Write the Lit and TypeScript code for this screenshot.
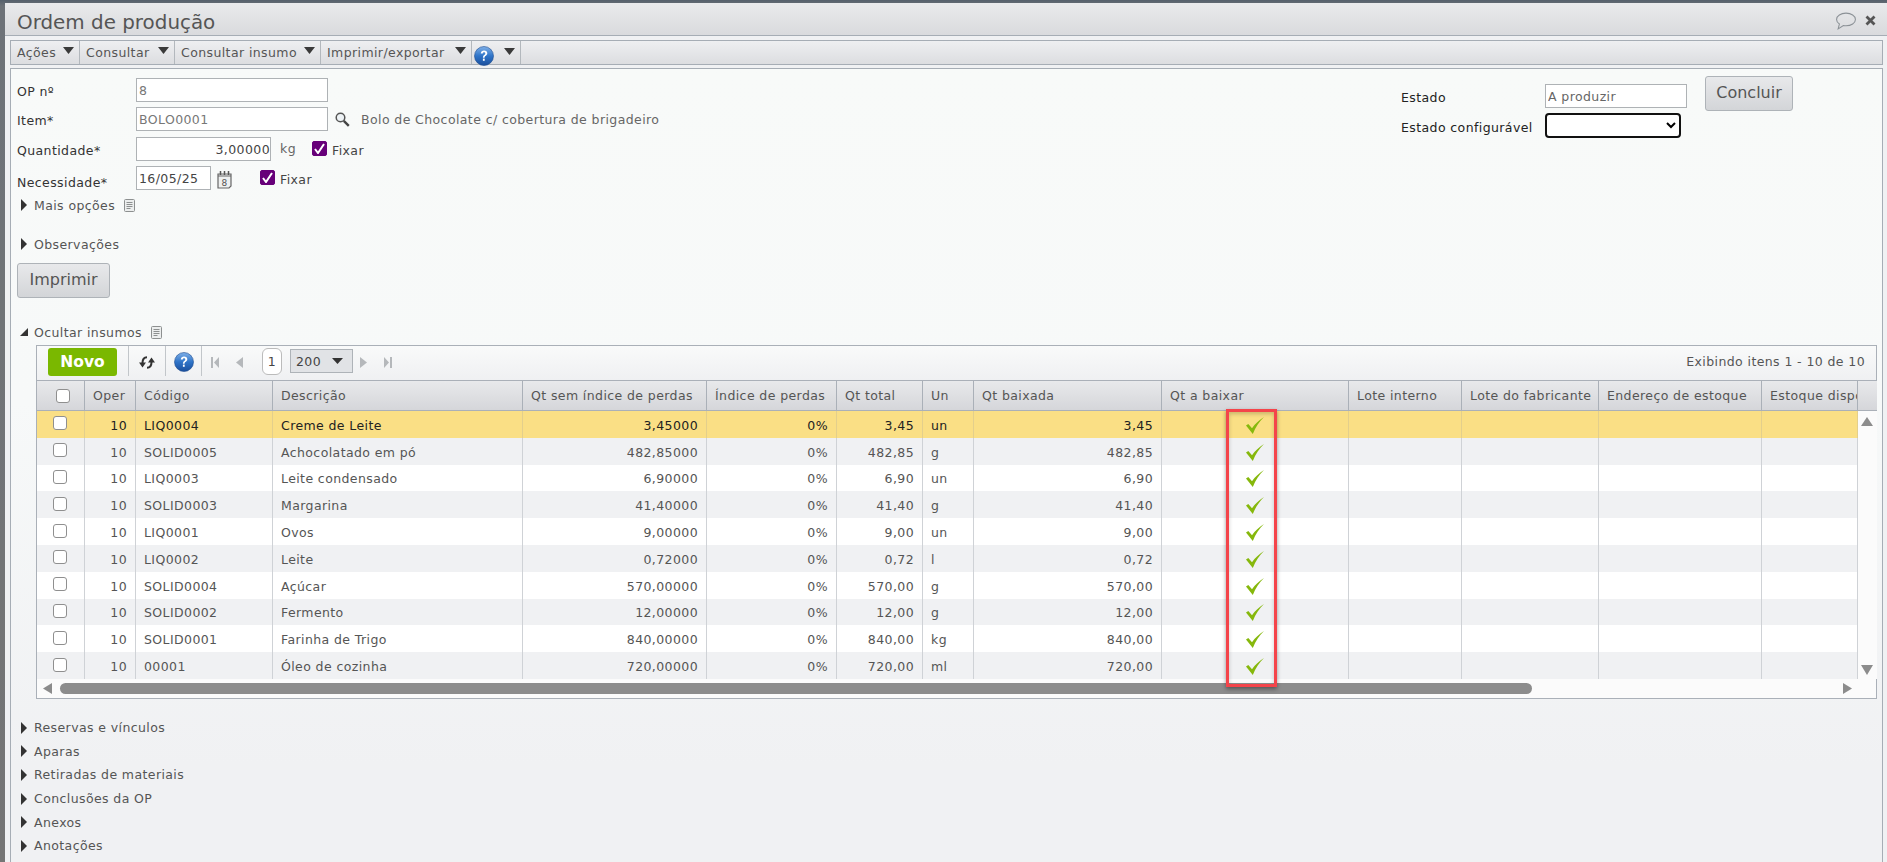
import { LitElement, html, css, svg } from "lit";
import { customElement } from "lit/decorators.js";

const COLS = [48, 51, 137, 250, 184, 130, 86, 51, 188, 187, 113, 137, 163, 96];
const HEADS = ["", "Oper", "Código", "Descrição", "Qt sem índice de perdas", "Índice de perdas", "Qt total", "Un", "Qt baixada", "Qt a baixar", "Lote interno", "Lote do fabricante", "Endereço de estoque", "Estoque disponível"];
const ROWS = [
  ["LIQ0004", "Creme de Leite", "3,45000", "3,45", "un"],
  ["SOLID0005", "Achocolatado em pó", "482,85000", "482,85", "g"],
  ["LIQ0003", "Leite condensado", "6,90000", "6,90", "un"],
  ["SOLID0003", "Margarina", "41,40000", "41,40", "g"],
  ["LIQ0001", "Ovos", "9,00000", "9,00", "un"],
  ["LIQ0002", "Leite", "0,72000", "0,72", "l"],
  ["SOLID0004", "Açúcar", "570,00000", "570,00", "g"],
  ["SOLID0002", "Fermento", "12,00000", "12,00", "g"],
  ["SOLID0001", "Farinha de Trigo", "840,00000", "840,00", "kg"],
  ["00001", "Óleo de cozinha", "720,00000", "720,00", "ml"],
];
const MENU = [
  ["Ações", 69],
  ["Consultar", 95],
  ["Consultar insumo", 146],
  ["Imprimir/exportar", 151],
];
const SECTIONS = ["Reservas e vínculos", "Aparas", "Retiradas de materiais", "Conclusões da OP", "Anexos", "Anotações"];

const caret = svg`<svg class="caret" width="11" height="7" viewBox="0 0 11 7"><path d="M0 0h11L5.500 7z" fill="#3a3a3a"/></svg>`;
const triRight = svg`<svg class="tri" width="6" height="12" viewBox="0 0 6 12"><path d="M0 0l6 6-6 6z" fill="#333"/></svg>`;
const triOpen = svg`<svg class="tri-open" width="8" height="8" viewBox="0 0 8 8"><path d="M8 0v8H0z" fill="#333"/></svg>`;
const doc = svg`<svg class="doc" width="11" height="13" viewBox="0 0 11 13"><rect x=".5" y=".5" width="10" height="12" rx="1" fill="#eceeee" stroke="#8d9090"/><path d="M2.500 3.500h6M2.500 5.500h6M2.500 7.500h6M2.500 9.500h4" stroke="#8d9090"/></svg>`;
const help = svg`<defs><linearGradient id="hb" x1="0" y1="0" x2="0" y2="1"><stop offset="0" stop-color="#7fb0e8"/><stop offset=".5" stop-color="#2f74c8"/><stop offset="1" stop-color="#1b4f9c"/></linearGradient></defs><circle cx="10" cy="10" r="9.500" fill="url(#hb)" stroke="#1d4c8f" stroke-width=".6"/><path d="M6.800 7.600c0-2 1.500-3 3.300-3 1.900 0 3.200 1.100 3.200 2.700 0 1.400-.9 2-1.800 2.700-.7.500-.9.900-.9 1.800H8.900c0-1.500.4-2.200 1.300-2.900.7-.5 1.100-.8 1.100-1.500 0-.7-.5-1.100-1.200-1.100-.8 0-1.300.5-1.300 1.300z" fill="#fff"/><rect x="8.900" y="12.600" width="1.800" height="2.200" fill="#fff"/>`;
const tick = svg`<svg class="tick" width="18" height="17" viewBox="0 0 18 17"><path d="M0 8.500l2.300-1.500 3.700 4.200C9 7 13 3 18 0 13.500 4.500 9.500 10 6.800 17z" fill="#86b80c"/></svg>`;

@customElement("app-root")
export class AppRoot extends LitElement {
  static styles = css`
    :host { display: block; width: 1887px; height: 862px; overflow: hidden; box-sizing: border-box; padding: 3px 0 0 5px;
      background: linear-gradient(#55606c, #6d7278 6px, #757575);
      font-family: "DejaVu Sans", Verdana, sans-serif; font-size: 12.500px; letter-spacing: .4px; color: #444; }
    * { box-sizing: border-box; }
    .window { height: 859px; display: flex; flex-direction: column; background: #f0f1f3; border-radius: 4px 0 0 0; }
    .title { height: 33px; flex: none; display: flex; align-items: center; padding: 3px 10px 0 12px;
      background: linear-gradient(#e9eaec, #d9dadd); border-bottom: 1px solid #a6adb5; }
    .title h1 { margin: 4px 0 0; font-weight: 400; font-size: 19.900px; letter-spacing: 0; color: #555; flex: 1; }
    .bubble { margin-right: 8px; }
    .close { margin-right: 1px; }
    .menu { height: 25px; flex: none; margin: 4px 4px 3px 5px; display: flex; border: 1px solid #a6adb5;
      background: linear-gradient(#eeeff1, #dcdde0); }
    .mi { display: flex; align-items: flex-start; border-right: 1px solid #b3b8bd; padding: 4px 5px 0 6px; justify-content: space-between; color: #555; line-height: 16px; }
    .caret { margin-top: 2px; flex: none; }
    .mi.h { padding: 5px 5px 0 2px; width: 49px; }
    .content { flex: 1; margin: 0 4px 0 5px; border: 1px solid #a6adb5; border-bottom: 0; min-height: 0;
      background: linear-gradient(#f8faf9, #f7f9f9 42%, #f0f1f3 88%); }
    .form { display: flex; justify-content: space-between; }
    .left { padding: 9px 0 0 6px; }
    .frow { display: flex; align-items: center; height: 24px; margin-bottom: 5px; }
    .frow .lab { width: 119px; color: #333; flex: none; padding-top: 2px; }
    .frow .lab.low { padding-top: 8px; }
    input.t { height: 24px; border: 1px solid #aeb2b5; background: #fff; font: inherit; letter-spacing: inherit; color: #777; padding: 0 2px; border-radius: 0; outline: 0; }
    input.dark { color: #444; }
    input.num { text-align: right; padding: 0; }
    .w192 { width: 192px; }
    .w135 { width: 135px; }
    .w75 { width: 75px; }
    .r2 { margin-bottom: 6px; }
    .search { margin-left: 7px; }
    .desc { margin-left: 11px; color: #666; }
    .kg { margin-left: 9px; color: #666; margin-top: -2px; }
    .fx { display: flex; align-items: center; color: #444; }
    .fx.a { margin-left: 16px; }
    .fx.b { margin-left: 28px; }
    input.ck { appearance: none; margin: 0 0 2px; width: 15px; height: 15px; border-radius: 2px; border: 1px solid #999; background: #fff; flex: none; display: block; }
    input.ck.on { background: #670079 center / 11px 11px no-repeat url("data:image/svg+xml,%3Csvg xmlns='http://www.w3.org/2000/svg' viewBox='0 0 11 11'%3E%3Cpath d='M1 6l3 4 6-9' fill='none' stroke='%23fff' stroke-width='2'/%3E%3C/svg%3E"); border-color: #670079; }
    .fx span { margin-left: 5px; padding-top: 2px; }
    .cal { margin-left: 6px; margin-top: 3px; }
    .sec { display: flex; align-items: center; height: 20px; color: #555; }
    .sec .tri { margin: 0 7px 0 4px; flex: none; }
    .sec .tri-open { margin: 0 6px 0 9px; flex: none; }
    .sec .doc { margin-left: 9px; }
    .more { margin-top: 2px; }
    .obs { margin-top: 19px; }
    .btn { display: block; height: 35px; border: 1px solid #aeb3b8; border-radius: 3px; background: linear-gradient(#e8e9eb, #d3d5d8);
      font: inherit; font-size: 16px; letter-spacing: 0; color: #555; padding: 0 0 2px; }
    .print { width: 93px; margin-top: 9px; }
    .right { display: grid; grid-template-columns: 144px 142px 18px 88px; grid-template-rows: 35px 25px; row-gap: 2px; margin: 7px 89px 0 0; align-content: start; color: #222; }
    .right .l1 { grid-column: 1; grid-row: 1; padding-top: 14px; }
    .right .l2 { grid-column: 1; grid-row: 2; align-self: center; padding-top: 3px; white-space: nowrap; }
    .right input { grid-column: 2; grid-row: 1; margin-top: 8px; width: 142px; color: #666; }
    .right .btn { grid-column: 4; grid-row: 1; width: 88px; }
    .right select { grid-column: 2 / span 2; grid-row: 2; width: 136px; height: 25px; border: 2px solid #111; border-radius: 4px; background: #fff; }
    .hide { margin-top: 24px; }
    .grid { position: relative; margin: 3px 5px 0 25px; height: 354px; border: 1px solid #aab0b8; background: #fbfbfb; display: flex; flex-direction: column; }
    .bar { height: 34px; flex: none; display: flex; align-items: flex-start; background: linear-gradient(#f9fafa, #eff0f2); position: relative; }
    .novo { margin: 2px 0 0 11px; width: 69px; height: 28px; border-radius: 3px; background: #7ab800; color: #fff; font-weight: 700; font-size: 15.500px; display: flex; align-items: center; justify-content: center; border: 0; font-family: inherit; padding: 0; }
    .vs { width: 1px; height: 30px; background: #c2c6ca; flex: none; }
    .s1 { margin-left: 11px; }
    .ref { margin: 9px 9px 0 9px; flex: none; }
    .hb { margin: 6px 7px 0 8px; flex: none; display: block; }
    .pg { flex: none; }
    .p1 { margin: 11px 0 0 9px; }
    .p2 { margin: 11px 0 0 17px; }
    .pg-box { margin: 2px 0 0 19px; width: 20px; height: 27px; border: 1px solid #bbb; border-radius: 6px; background: #fff; display: flex; align-items: center; justify-content: center; color: #444; }
    .sz { margin: 3px 0 0 8px; width: 63px; height: 24px; border: 1px solid #aeb3b8; background: #e1e3e6; display: flex; align-items: center; padding-left: 5px; color: #444; justify-content: space-between; padding-right: 9px; }
    .p3 { margin: 11px 0 0 7px; }
    .p4 { margin: 11px 0 0 17px; }
    .count { margin: 8px 11px 0 auto; color: #555; }
    .area { display: grid; grid-template-columns: 1821px 19px; flex: none; }
    .tw { overflow: hidden; }
    table { table-layout: fixed; border-collapse: separate; border-spacing: 0; width: 1821px; font-size: inherit; }
    th { height: 31px; font-weight: 400; text-align: left; color: #555; padding: 0 0 0 8px; white-space: nowrap; overflow: hidden;
      background: linear-gradient(#e8e9eb, #d5d6da); border-top: 1px solid #aab0b8; border-bottom: 1px solid #aab0b8; border-right: 1px solid #aab0b8; }
    .corner { height: 31px; background: linear-gradient(#e8e9eb, #d5d6da); border-top: 1px solid #aab0b8; border-bottom: 1px solid #aab0b8; }
    th.c0 input { margin-left: 11px; }
    td { height: 26.800px; padding: 2px 8px 0; white-space: nowrap; overflow: hidden; border-right: 1px solid #cfd2d6; color: #555; background: #fff; }
    tr:nth-child(even) td { background: #f0f1f3; }
    tr.sel td { background: #fadf85; color: #222; border-right-color: #e3cf8c; }
    td.r { text-align: right; padding-right: 8px; }
    td.c { text-align: center; padding: 5px 0 0; }
    td.c0 { padding: 0 0 2px 16px; }
    input.gc { appearance: none; display: block; margin: 0; width: 14px; height: 14px; border: 1px solid #8f8f8f; border-radius: 3px; background: #fff; }
    .vbar { background: #fbfbfb; display: flex; flex-direction: column; align-items: center; justify-content: space-between; padding: 6px 2px 4px 0; }
    .hbar { flex: 1; display: flex; align-items: center; padding: 0 24px 0 6px; }
    .thumb { width: 1472px; height: 11px; border-radius: 6px; background: #8c8c8c; margin: 0 8px 0 8px; }
    .hbar .end { margin-left: auto; }
    .mark { position: absolute; left: 1189px; top: 63px; width: 51px; height: 278px; border: 3px solid #f4444a; box-shadow: 0 2px 4px rgba(0,0,0,.4), inset 0 2px 4px rgba(0,0,0,.2); }
    .secs { margin-top: 17px; }
    .secs .sec { height: 23.600px; }
    .secs .tri { margin-left: 10px; }
  `;

  private colgroup() {
    return html`<colgroup>${COLS.map((w) => html`<col style="width:${w}px" />`)}</colgroup>`;
  }

  render() {
    return html`
      <div class="window">
        <div class="title">
          <h1>Ordem de produção</h1>
          <svg class="bubble" width="22" height="18" viewBox="0 0 21 17"><path d="M10.500 1C5.500 1 1.500 3.600 1.500 7c0 1.800 1.100 3.300 2.700 4.300L3 16l5-3.100c.8.100 1.600.200 2.500.200 5 0 9-2.700 9-6.100S15.500 1 10.500 1z" fill="none" stroke="#8b9196"/></svg>
          <svg class="close" width="11" height="11" viewBox="0 0 11 11"><path d="M1.500 1.500l8 8M9.500 1.500l-8 8" stroke="#555" stroke-width="2.800"/></svg>
        </div>
        <div class="menu">
          ${MENU.map(([t, w]) => html`<div class="mi" style="width:${w}px"><span>${t}</span>${caret}</div>`)}
          <div class="mi h"><svg width="20" height="20" viewBox="0 0 20 20">${help}</svg>${caret}</div>
        </div>
        <div class="content">
          <div class="form">
            <div class="left">
              <div class="frow"><span class="lab">OP nº</span><input class="t w192" .value=${"8"} /></div>
              <div class="frow r2">
                <span class="lab">Item*</span><input class="t w192" .value=${"BOLO0001"} />
                <svg class="search" width="15" height="15" viewBox="0 0 15 15"><circle cx="5.500" cy="5.500" r="4.300" fill="#eef3f6" stroke="#555" stroke-width="1.500"/><path d="M8.800 8.800l5 5" stroke="#444" stroke-width="2.400"/></svg>
                <span class="desc">Bolo de Chocolate c/ cobertura de brigadeiro</span>
              </div>
              <div class="frow">
                <span class="lab">Quantidade*</span><input class="t w135 num dark" .value=${"3,00000"} />
                <span class="kg">kg</span>
                <label class="fx a"><input class="ck on" type="checkbox" checked /><span>Fixar</span></label>
              </div>
              <div class="frow">
                <span class="lab low">Necessidade*</span><input class="t w75 dark" .value=${"16/05/25"} />
                <svg class="cal" width="15" height="18" viewBox="0 0 15 18"><path d="M1 3h13v12l-2 2H1z" fill="#eef0f0" stroke="#666" stroke-width="1.200"/><path d="M3.500 0v4M7.500 0v4M11.500 0v4" stroke="#555" stroke-width="1.500"/><path d="M1 5h13" stroke="#666"/><text x="7.500" y="14.500" font-size="9" text-anchor="middle" fill="#555" font-family="DejaVu Sans">8</text></svg>
                <label class="fx b"><input class="ck on" type="checkbox" checked /><span>Fixar</span></label>
              </div>
              <div class="sec more">${triRight}<span>Mais opções</span>${doc}</div>
              <div class="sec obs">${triRight}<span>Observações</span></div>
              <button class="btn print">Imprimir</button>
            </div>
            <div class="right">
              <span class="l1">Estado</span>
              <input class="t" .value=${"A produzir"} />
              <button class="btn">Concluir</button>
              <span class="l2">Estado configurável</span>
              <select><option></option></select>
            </div>
          </div>
          <div class="sec hide">${triOpen}<span>Ocultar insumos</span>${doc}</div>
          <div class="grid">
            <div class="bar">
              <button class="novo">Novo</button>
              <div class="vs s1"></div>
              <svg class="ref" width="18" height="15" viewBox="0 0 18 15"><path d="M9 2.200C5.500 2.200 4.500 4 4.500 8" fill="none" stroke="#333" stroke-width="2"/><path d="M1 7.500h7l-3.500 5z" fill="#333"/><path d="M9 12.800c3.500 0 4.500-1.800 4.500-5.800" fill="none" stroke="#333" stroke-width="2"/><path d="M10 7.500h7l-3.500-5z" fill="#333"/></svg>
              <div class="vs"></div>
              <svg class="hb" width="20" height="20" viewBox="0 0 20 20">${help}</svg>
              <div class="vs"></div>
              <svg class="pg p1" width="8" height="11" viewBox="0 0 8 11"><path d="M0 0h2v11H0zM8 0v11L3 5.500z" fill="#b5b8bb"/></svg>
              <svg class="pg p2" width="7" height="11" viewBox="0 0 7 11"><path d="M7 0v11L0 5.500z" fill="#b5b8bb"/></svg>
              <div class="pg-box">1</div>
              <div class="sz"><span>200</span><svg width="11" height="6" viewBox="0 0 11 6"><path d="M0 0h11L5.500 6z" fill="#333"/></svg></div>
              <svg class="pg p3" width="7" height="11" viewBox="0 0 7 11"><path d="M0 0v11l7-5.500z" fill="#b5b8bb"/></svg>
              <svg class="pg p4" width="8" height="11" viewBox="0 0 8 11"><path d="M8 0H6v11h2zM0 0v11l5-5.500z" fill="#b5b8bb"/></svg>
              <span class="count">Exibindo itens 1 - 10 de 10</span>
            </div>
            <div class="area">
              <div class="tw"><table>${this.colgroup()}<thead><tr>
                ${HEADS.map((h, i) => html`<th class="c${i}">${i === 0 ? html`<input class="gc" type="checkbox" />` : h}</th>`)}
              </tr></thead></table></div>
              <div class="corner"></div>
              <div class="tw"><table>${this.colgroup()}<tbody>
                ${ROWS.map((r, i) => html`<tr class=${i === 0 ? "sel" : ""}>
                  <td class="c0"><input class="gc" type="checkbox" /></td>
                  <td class="r">10</td><td>${r[0]}</td><td>${r[1]}</td>
                  <td class="r">${r[2]}</td><td class="r">0%</td><td class="r">${r[3]}</td>
                  <td>${r[4]}</td><td class="r">${r[3]}</td><td class="c">${tick}</td>
                  <td></td><td></td><td></td><td></td>
                </tr>`)}
              </tbody></table></div>
              <div class="vbar">
                <svg width="12" height="9" viewBox="0 0 12 9"><path d="M6 0l6 9H0z" fill="#8c8c8c"/></svg>
                <svg width="12" height="10" viewBox="0 0 12 10"><path d="M0 0h12L6 10z" fill="#8c8c8c"/></svg>
              </div>
            </div>
            <div class="hbar">
              <svg width="9" height="11" viewBox="0 0 9 11"><path d="M9 0v11L0 5.500z" fill="#8c8c8c"/></svg>
              <div class="thumb"></div>
              <svg class="end" width="9" height="11" viewBox="0 0 9 11"><path d="M0 0v11l9-5.500z" fill="#8c8c8c"/></svg>
            </div>
            <div class="mark"></div>
          </div>
          <div class="secs">${SECTIONS.map((s) => html`<div class="sec">${triRight}<span>${s}</span></div>`)}</div>
        </div>
      </div>
    `;
  }
}
